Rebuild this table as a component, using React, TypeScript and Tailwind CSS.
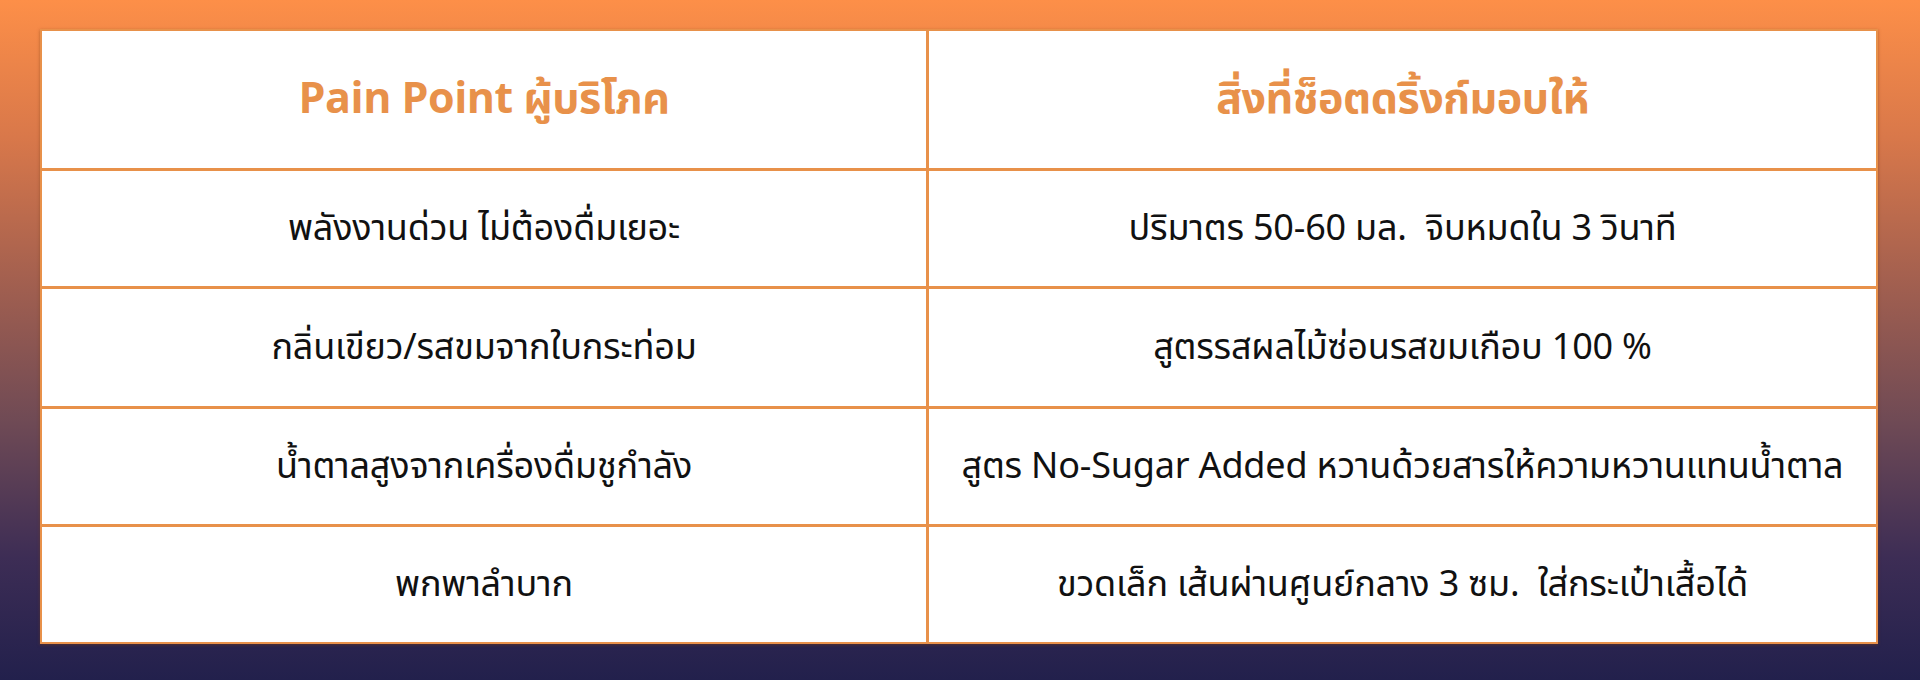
import React from "react";

const rows: [string, string][] = [
  ["พลังงานด่วน ไม่ต้องดื่มเยอะ", "ปริมาตร 50-60 มล.  จิบหมดใน 3 วินาที"],
  ["กลิ่นเขียว/รสขมจากใบกระท่อม", "สูตรรสผลไม้ซ่อนรสขมเกือบ 100 %"],
  ["น้ำตาลสูงจากเครื่องดื่มชูกำลัง", "สูตร No-Sugar Added หวานด้วยสารให้ความหวานแทนน้ำตาล"],
  ["พกพาลำบาก", "ขวดเล็ก เส้นผ่านศูนย์กลาง 3 ซม.  ใส่กระเป๋าเสื้อได้"],
];

const heights = ["h-[115px]", "h-[117px]", "h-[115px]", "h-[115px]"];

export default function App() {
  return (
    <div
      className="w-full h-[680px] bg-[linear-gradient(to_bottom,#fd8f48_0%,#d9784a_20%,#a6614f_40%,#6f4a55_62%,#3d2d55_82%,#22204c_100%)] pl-[40px] pr-[42px] pt-[29px]"
      style={{ fontFamily: '"Noto Sans Thai", "Noto Sans", "Open Sans", sans-serif' }}
    >
      <div className="grid grid-cols-[884px_1fr] gap-[3px] bg-[#e8914a] p-[2px] shadow-[0_1px_3px_rgba(120,60,20,0.5)]">
        <div className="h-[137px] bg-white flex items-center justify-center">
          <span className="text-[43px] font-bold text-[#e8914a] leading-none tracking-[-0.5px]">Pain Point ผู้บริโภค</span>
        </div>
        <div className="h-[137px] bg-white flex items-center justify-center">
          <span className="text-[43px] font-bold text-[#e8914a] leading-none tracking-[-0.5px]">สิ่งที่ช็อตดริ้งก์มอบให้</span>
        </div>
        {rows.map(([a, b], i) => (
          <React.Fragment key={i}>
            <div className={`${heights[i]} bg-white flex items-center justify-center`}>
              <span className="text-[36px] text-[#111111] leading-none tracking-[-0.2px]">{a}</span>
            </div>
            <div className={`${heights[i]} bg-white flex items-center justify-center`}>
              <span className="text-[36px] text-[#111111] leading-none tracking-[-0.2px] whitespace-pre">{b}</span>
            </div>
          </React.Fragment>
        ))}
      </div>
    </div>
  );
}
